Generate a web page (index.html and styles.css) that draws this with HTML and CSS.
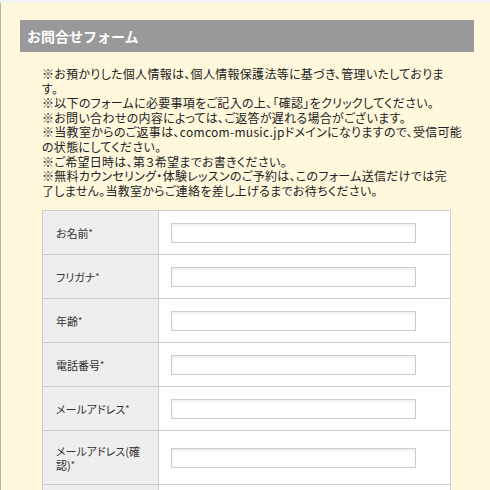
FILE: index.html
```html
<!DOCTYPE html>
<html lang="ja">
<head>
    <meta charset="UTF-8">
    <title>お問合せフォーム</title>
    <link rel="stylesheet" href="styles.css">
</head>
<body>

<div id="wrap">
    <h2 class="ttl">お問合せフォーム</h2>

    <p class="notes">
        ※お預かりした個人情報は、個人情報保護法等に基づき、管理いたしておりま<br>す。<br>
        ※以下のフォームに必要事項をご記入の上、「確認」をクリックしてください。<br>
        ※お問い合わせの内容によっては、ご返答が遅れる場合がございます。<br>
        ※当教室からのご返事は、comcom-music.jpドメインになりますので、受信可能<br>の状態にしてください。<br>
        ※ご希望日時は、第３希望までお書きください。<br>
        ※無料カウンセリング・体験レッスンのご予約は、このフォーム送信だけでは完<br>了しません。当教室からご連絡を差し上げるまでお待ちください。
    </p>

    <table class="form">
        <tr>
            <th>お名前<span>*</span></th>
            <td><input type="text" class="text" name="name"></td>
        </tr>
        <tr>
            <th>フリガナ<span>*</span></th>
            <td><input type="text" class="text" name="kana"></td>
        </tr>
        <tr>
            <th>年齢<span>*</span></th>
            <td><input type="text" class="text" name="age"></td>
        </tr>
        <tr>
            <th>電話番号<span>*</span></th>
            <td><input type="text" class="text" name="tel"></td>
        </tr>
        <tr>
            <th>メールアドレス<span>*</span></th>
            <td><input type="text" class="text" name="mail"></td>
        </tr>
        <tr>
            <th>メールアドレス(確認)<span>*</span></th>
            <td><input type="text" class="text" name="mail2"></td>
        </tr>
        <tr>
            <th>ご住所<span>*</span></th>
            <td><input type="text" class="text" name="addr"></td>
        </tr>
    </table>
</div>

</body>
</html>
```

FILE: styles.css
```css
*{margin: 0; padding: 0;}
html,body{
    height: 100%;
}
body{
    background: #f4f4f4;
    font-family: "Noto Sans CJK JP", "Liberation Sans", sans-serif;
    color: #333;
    overflow: hidden;
}
#wrap{
    margin-top: 3px;
    min-height: 100%;
    background: #fff8dc;
    border-left: 1px solid #b4b4a8;
    padding: 17px 16px 0 19px;
}
.ttl{
    height: 32px;
    line-height: 32px;
    background: #999;
    color: #fff;
    font-size: 14px;
    font-weight: bold;
    padding-left: 7px;
}
.notes{
    margin: 15px 0 0 22px;
    font-size: 12px;
    line-height: 14.6px;
    color: #222;
    white-space: nowrap;
    letter-spacing: 0.3px;
    font-feature-settings: "palt";
}
.form{
    margin: 12px 0 0 22px;
    width: 409px;
    border-collapse: collapse;
    border: 1px solid #ccc;
    background: #fff;
}
.form tr{
    height: 44px;
}
.form th,
.form td{
    border-bottom: 1px solid #ccc;
}
.form th{
    width: 90px;
    padding: 13px 12px 12px 13px;
    background: #eee;
    border-right: 1px solid #ccc;
    text-align: left;
    font-size: 11px;
    font-weight: normal;
    line-height: 14px;
    color: #333;
    font-feature-settings: "palt";
}
.form th span{
    font-size: 9px;
    vertical-align: top;
}
.form td{
    padding: 0 12px;
}
.form .text{
    width: 245px;
    height: 20px;
    border: 1px solid #ccc;
    box-shadow: inset 0 2px 2px #f0f0f0;
    box-sizing: border-box;
    display: block;
}
```
